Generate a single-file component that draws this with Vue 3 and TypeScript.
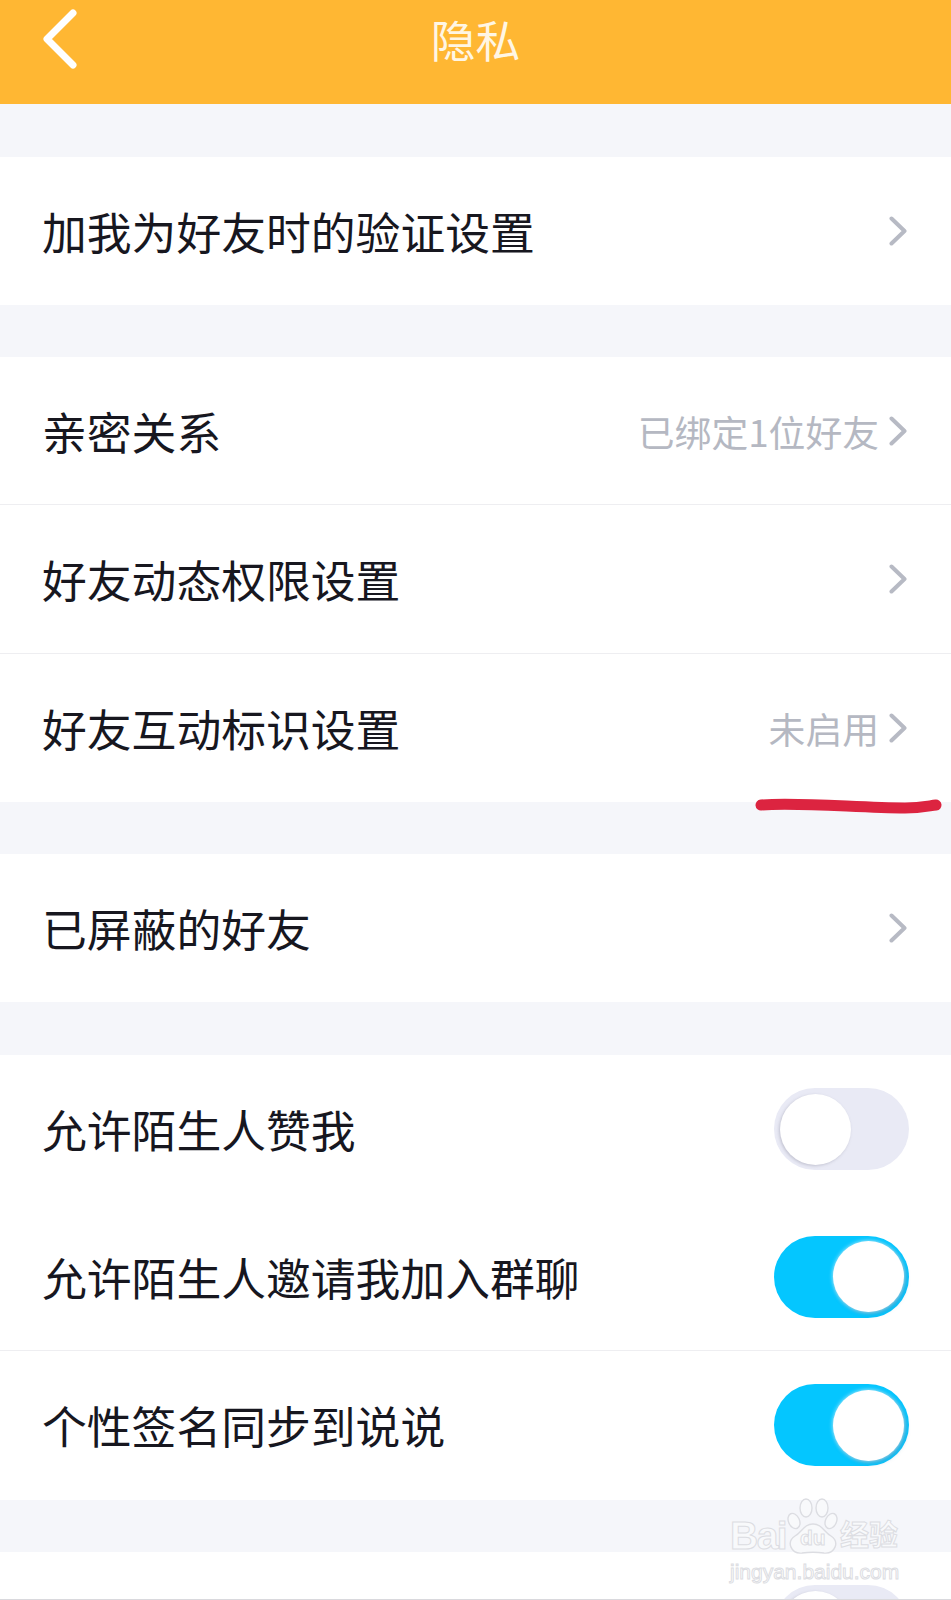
<script setup lang="ts">
interface Row {
  label: string
  value?: string
  toggle?: boolean
  arrow?: boolean
  divider?: boolean
}

const groups: Row[][] = [
  [{ label: '加我为好友时的验证设置', arrow: true }],
  [
    { label: '亲密关系', value: '已绑定1位好友', arrow: true, divider: true },
    { label: '好友动态权限设置', arrow: true, divider: true },
    { label: '好友互动标识设置', value: '未启用', arrow: true },
  ],
  [{ label: '已屏蔽的好友', arrow: true }],
  [
    { label: '允许陌生人赞我', toggle: false },
    { label: '允许陌生人邀请我加入群聊', toggle: true, divider: true },
    { label: '个性签名同步到说说', toggle: true },
  ],
  [{ label: '', toggle: false }],
]
</script>

<template>
  <div class="page">
    <header class="header">
      <svg class="back" width="40" height="64" viewBox="0 0 40 64" aria-hidden="true">
        <path d="M33 8 L7 34 L33 60" fill="none" stroke="#fff" stroke-width="7" stroke-linecap="round" stroke-linejoin="round" />
      </svg>
      <h1 class="title">隐私</h1>
    </header>

    <section v-for="(group, g) in groups" :key="g" class="group">
      <div v-for="(row, r) in group" :key="r" class="row" :class="{ divided: row.divider }">
        <span class="label">{{ row.label }}</span>
        <span v-if="row.value" class="value">{{ row.value }}</span>
        <svg v-if="row.arrow" class="chevron" width="18" height="30" viewBox="0 0 18 30" aria-hidden="true">
          <path d="M2.5 2.5 L15.5 15 L2.5 27.5" fill="none" stroke="#b7bac4" stroke-width="4" stroke-linecap="round" stroke-linejoin="round" />
        </svg>
        <span v-if="row.toggle !== undefined" class="switch" :class="{ on: row.toggle }">
          <span class="knob"></span>
        </span>
      </div>
    </section>

    <svg class="scribble" width="951" height="30" viewBox="0 0 951 30" aria-hidden="true">
      <path d="M761 9 C800 6 860 12 905 12 C920 12 928 10 936 9" fill="none" stroke="#dc2440" stroke-width="11" stroke-linecap="round" />
    </svg>

    <div class="watermark">
      <div class="mark-top">
        <span class="mark-bai">Bai</span>
        <svg class="paw" width="52" height="56" viewBox="0 0 52 56" aria-hidden="true">
          <g fill="rgba(255,255,255,.3)" stroke="#dcdde2" stroke-width="1.4">
            <ellipse cx="8" cy="23" rx="5.5" ry="8" transform="rotate(-25 8 23)" />
            <ellipse cx="20" cy="10" rx="6" ry="9" />
            <ellipse cx="36" cy="10" rx="6" ry="9" />
            <ellipse cx="45" cy="23" rx="5.5" ry="8" transform="rotate(25 45 23)" />
            <path d="M27 26 C36 26 38 34 45 38 C54 44 49 56 38 55 C31 54 23 54 16 55 C5 56 0 44 9 38 C16 34 18 26 27 26 Z" />
          </g>
        </svg>
        <span class="mark-du">du</span>
        <span class="mark-cn">经验</span>
      </div>
      <div class="mark-url">jingyan.baidu.com</div>
    </div>

    <div class="edge"></div>
  </div>
</template>

<style>
html,
body {
  margin: 0;
  background: #f5f6fa;
}
</style>

<style scoped>
.page {
  position: relative;
  width: 951px;
  height: 1600px;
  overflow: hidden;
  background: #f5f6fa;
  font-family: "Noto Sans CJK SC", "Liberation Sans", sans-serif;
}

.header {
  position: relative;
  display: flex;
  align-items: flex-start;
  justify-content: center;
  height: 104px;
  background: #ffb733;
}

.back {
  position: absolute;
  left: 40px;
  top: 5px;
}

.title {
  margin: 9px 0 0;
  color: #fff6e4;
  font-size: 44.8px;
  font-weight: 400;
  line-height: 60px;
}

.group {
  margin-top: 52.5px;
  background: #fff;
}

.row {
  display: flex;
  align-items: center;
  box-sizing: border-box;
  height: 148.2px;
  padding: 0 42px;
}

.divided {
  border-bottom: 1px solid #eeeef1;
}

.label {
  flex: 1;
  color: #17171f;
  font-size: 44.8px;
  line-height: 60px;
}

.value {
  margin-right: 10px;
  color: #b5b8c2;
  font-size: 36.8px;
  line-height: 50px;
}

.chevron {
  flex: none;
  margin-right: 2px;
}

.switch {
  display: flex;
  align-items: center;
  flex: none;
  box-sizing: border-box;
  width: 135px;
  height: 82px;
  padding: 0 5px 0 6px;
  margin-left: auto;
  border-radius: 41px;
  background: #e9eaf5;
}

.switch.on {
  justify-content: flex-end;
  background: #04c6ff;
}

.knob {
  width: 71px;
  height: 71px;
  border-radius: 50%;
  background: #fff;
  box-shadow: -1px 1px 3px rgba(120, 120, 140, .35);
}

.switch.on .knob {
  box-shadow: 0 0 4px rgba(255, 255, 255, .8), 2px 2px 4px rgba(70, 130, 170, .55);
}

.scribble {
  position: absolute;
  left: 0;
  top: 796px;
}

.watermark {
  position: absolute;
  left: 729px;
  top: 1498px;
  width: 175px;
}

.mark-top {
  position: relative;
  height: 62px;
}

.mark-bai,
.mark-du,
.mark-cn,
.mark-url {
  position: absolute;
  color: rgba(255, 255, 255, .35);
  -webkit-text-stroke: 1px #dcdde2;
  font-family: "Liberation Sans", "Noto Sans CJK SC", sans-serif;
}

.mark-bai {
  left: 1px;
  top: 16px;
  font-size: 39px;
  font-weight: 700;
  letter-spacing: -1.5px;
  line-height: 44px;
}

.paw {
  position: absolute;
  left: 57px;
  top: 0;
}

.mark-du {
  left: 71px;
  top: 26px;
  font-size: 21px;
  font-weight: 700;
  line-height: 28px;
}

.mark-cn {
  left: 111px;
  top: 19px;
  font-size: 29px;
  font-weight: 700;
  line-height: 38px;
}

.mark-url {
  position: absolute;
  top: 61px;
  left: 1px;
  color: transparent;
  font-size: 21px;
  line-height: 26px;
  white-space: nowrap;
}

.edge {
  position: absolute;
  left: 0;
  right: 0;
  bottom: 0;
  height: 1px;
  background: #d9d9dd;
}
</style>
